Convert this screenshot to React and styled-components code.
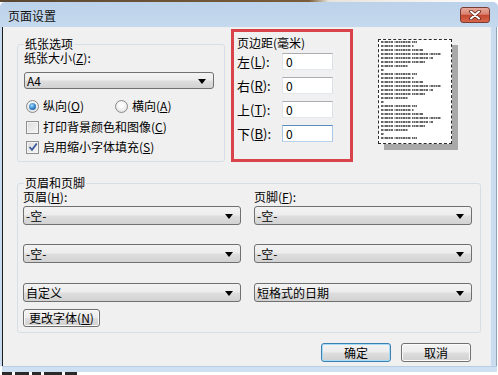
import React from 'react';
import styled, { createGlobalStyle } from 'styled-components';

const Global = createGlobalStyle`
  html, body { margin: 0; padding: 0; background: #fff; }
  body {
    font-family: "Noto Sans CJK SC", "Liberation Sans", sans-serif;
    font-size: 12px;
    color: #000;
  }
  * { box-sizing: border-box; }
`;

const Window = styled.div`
  width: 498px;
  height: 375px;
  display: flex;
  flex-direction: column;
  overflow: hidden;
  background: #fff;
`;

const Desktop = styled.div`
  height: 2px;
  background: linear-gradient(90deg, #5b4732 0%, #7a5c38 62%, #e8e2da 66%, #ffffff 100%);
`;

const TitleBar = styled.div`
  height: 25px;
  display: flex;
  align-items: flex-start;
  justify-content: space-between;
  padding: 0 8px 0 8px;
  background: linear-gradient(180deg, #bcd2ea 0%, #c5d9ee 100%);
  border-radius: 5px 5px 0 0;
`;

const Title = styled.div`
  font-size: 12px;
  line-height: 16px;
  margin-top: 6px;
  color: #111;
`;

const CloseBtn = styled.div`
  width: 30px;
  height: 16px;
  margin-top: 5px;
  border: 1px solid #7a3b32;
  border-radius: 3px;
  background: linear-gradient(180deg, #e9a99b 0%, #d9806e 45%, #c4472f 52%, #d8674c 100%);
  display: flex;
  align-items: center;
  justify-content: center;
`;

const Middle = styled.div`
  height: 339px;
  display: flex;
`;

const LeftFrame = styled.div`
  width: 3px;
  background: linear-gradient(90deg, #c8daee 0 2px, #1c1c1c 2px 3px);
`;

const RightFrame = styled.div`
  width: 8px;
  background: linear-gradient(90deg, #e6eef7 0 1px, #cbdcef 1px 6px, #8fa3b9 6px 7px, #ffffff 7px);
`;

const Client = styled.div`
  flex: 1;
  background: #f0f0f0;
  padding: 2px 9px 0 14px;
  display: flex;
  flex-direction: column;
`;

const BottomFrame = styled.div`
  height: 6px;
  margin-left: 2px;
  margin-right: 1px;
  background: linear-gradient(180deg, #b9cde3 0 1px, #cfe0f2 1px);
`;

const Strip = styled.div`
  height: 3px;
  display: flex;
  gap: 3px;
  padding-left: 2px;
  background: #fff;
`;

const StripMark = styled.span`
  width: ${p => p.$w}px;
  height: 3px;
  background: #2a2a2a;
`;

const TopRow = styled.div`
  display: flex;
  align-items: flex-start;
`;

const Group = styled.fieldset`
  margin: ${p => p.$mt}px 0 0 0;
  width: ${p => p.$w}px;
  padding: 0 ${p => p.$pr}px ${p => p.$pb}px ${p => p.$pl}px;
  border: 1px solid #d5dfe5;
  border-radius: 3px;
  min-inline-size: 0;
`;

const Legend = styled.legend`
  font-size: 12px;
  line-height: 14px;
  padding: 0 1px;
  margin-left: ${p => p.$ml || 0}px;
`;

const Label = styled.div`
  line-height: 14px;
  height: 14px;
  white-space: nowrap;
`;

const Combo = styled.div`
  width: ${p => p.$w}px;
  height: ${p => p.$h}px;
  margin-top: ${p => p.$mt || 0}px;
  border: 1px solid #707070;
  border-radius: 3px;
  background: linear-gradient(180deg, #f3f3f3 0%, #ececec 48%, #dedede 52%, #d2d2d2 100%);
  display: flex;
  align-items: center;
  justify-content: space-between;
  padding: 0 7px 0 2px;
  line-height: 14px;
  white-space: nowrap;
`;

const Arrow = styled.span`
  width: 0;
  height: 0;
  border-left: 4px solid transparent;
  border-right: 4px solid transparent;
  border-top: 5px solid #000;
  margin-top: 1px;
`;

const OptionRow = styled.div`
  display: flex;
  align-items: center;
  height: 16px;
  margin-top: ${p => p.$mt}px;
  padding-left: 2px;
`;

const Option = styled.label`
  display: flex;
  align-items: center;
  gap: 4px;
  width: ${p => (p.$w ? `${p.$w}px` : 'auto')};
  line-height: 14px;
  white-space: nowrap;
`;

const Radio = styled.span`
  width: 13px;
  height: 13px;
  border-radius: 50%;
  border: 1px solid #8a8a8a;
  background: radial-gradient(circle at 50% 40%, #ffffff 20%, #d6d6d6 100%);
  display: inline-flex;
  align-items: center;
  justify-content: center;
  flex: none;
  &::after {
    content: '';
    width: ${p => (p.$checked ? '7px' : '0')};
    height: ${p => (p.$checked ? '7px' : '0')};
    border-radius: 50%;
    background: radial-gradient(circle at 40% 35%, #9fdcff 0%, #2f7fc4 55%, #17457f 100%);
  }
`;

const Check = styled.span`
  width: 13px;
  height: 13px;
  border: 1px solid #8e8f8f;
  background: linear-gradient(135deg, #dcdcdc 0%, #f6f6f6 100%);
  box-shadow: inset 0 0 0 1px #f4f4f4;
  display: inline-flex;
  align-items: center;
  justify-content: center;
  flex: none;
`;

const MarginBox = styled.div`
  width: 122px;
  height: 133px;
  margin-left: 6px;
  border: 3px solid #d9434a;
  padding: 4px 0 0 3px;
  display: flex;
  flex-direction: column;
  gap: 7px;
`;

const MarginTitle = styled.div`
  line-height: 14px;
  margin-bottom: -4px;
`;

const MarginRow = styled.div`
  display: flex;
  align-items: center;
  height: 17px;
`;

const MarginLabel = styled.span`
  width: 45px;
  line-height: 14px;
  font-size: 13px;
  white-space: nowrap;
`;

const NumInput = styled.input`
  width: 51px;
  height: 17px;
  margin: 0;
  padding: 0 0 0 3px;
  font-family: inherit;
  font-size: 12px;
  line-height: 14px;
  color: #000;
  background: #fff;
  border: 1px solid;
  border-color: ${p => (p.$focus ? '#5a8dbf #a9c6e4 #b7d2ec #a9c6e4' : '#abadb3 #dbdfe6 #e3e9ef #e2e3ea')};
  outline: none;
`;

const Preview = styled.div`
  width: 74px;
  height: 105px;
  margin: 10px 0 0 25px;
  background: #fff;
  border: 1px dashed #2a2a2a;
  box-shadow: 6px 6px 0 #a9a9a9;
  flex: none;
`;

const Columns = styled.div`
  display: grid;
  grid-template-columns: 218px 218px;
  column-gap: 13px;
`;

const Column = styled.div`
  display: flex;
  flex-direction: column;
`;

const Button = styled.div`
  width: ${p => p.$w}px;
  height: ${p => p.$h}px;
  margin-top: ${p => p.$mt || 0}px;
  border: 1px solid ${p => (p.$default ? '#3c7fb1' : '#707070')};
  border-radius: 3px;
  background: linear-gradient(180deg, #f4f4f4 0%, #ececec 48%, #dedede 52%, #d0d0d0 100%);
  box-shadow: ${p => (p.$default ? 'inset 0 0 0 1px #a8dcf6' : 'inset 0 0 0 1px #fbfbfb')};
  display: flex;
  align-items: center;
  justify-content: center;
  line-height: 14px;
  white-space: nowrap;
`;

const ButtonRow = styled.div`
  display: flex;
  justify-content: flex-end;
  gap: 10px;
  margin-top: 10px;
  padding-right: 10px;
`;

const blockWidths = [36, 33, 42, 60, 52, 44, 27, 3];
const previewLines = [];
for (let b = 0; b < 3; b++) blockWidths.forEach(w => previewLines.push(w));
previewLines.push(36);

function PagePreview() {
  return (
    <Preview>
      <svg width="72" height="103" viewBox="0 0 72 103">
        {previewLines.map((w, i) => (
          <line
            key={i}
            x1="2"
            x2={2 + w}
            y1={2 + i * 4}
            y2={2 + i * 4}
            stroke="#333"
            strokeWidth="1.7"
            strokeDasharray="2 0.5 1 0.5 3 0.5 1.5 0.5 2.5 1.5 1 0.5 2 0.5"
          />
        ))}
      </svg>
    </Preview>
  );
}

function Key({ c }) {
  return (
    <>
      (<u>{c}</u>)
    </>
  );
}

export default function App() {
  return (
    <>
      <Global />
      <Window>
        <Desktop />
        <TitleBar>
          <Title>页面设置</Title>
          <CloseBtn>
            <svg width="14" height="10" viewBox="0 0 14 10">
              <path d="M3 1.5 L11 8.5 M11 1.5 L3 8.5" stroke="#5a1e16" strokeWidth="3.6" strokeLinecap="round" />
              <path d="M3 1.5 L11 8.5 M11 1.5 L3 8.5" stroke="#ffffff" strokeWidth="2" strokeLinecap="round" />
            </svg>
          </CloseBtn>
        </TitleBar>
        <Middle>
          <LeftFrame />
          <Client>
            <TopRow>
              <Group $mt={8} $w={208} $pl={6} $pr={6} $pb={6}>
                <Legend>纸张选项</Legend>
                <Label>纸张大小<Key c="Z" />:</Label>
                <Combo $w={190} $h={17} $mt={7}>
                  <span>A4</span>
                  <Arrow />
                </Combo>
                <OptionRow $mt={9}>
                  <Option $w={89}>
                    <Radio $checked />
                    <span>纵向<Key c="O" /></span>
                  </Option>
                  <Option>
                    <Radio />
                    <span>横向<Key c="A" /></span>
                  </Option>
                </OptionRow>
                <OptionRow $mt={5}>
                  <Option>
                    <Check />
                    <span>打印背景颜色和图像<Key c="C" /></span>
                  </Option>
                </OptionRow>
                <OptionRow $mt={4}>
                  <Option>
                    <Check>
                      <svg width="10" height="10" viewBox="0 0 10 10">
                        <path d="M1.5 5 L4 7.8 L8.8 1.5" fill="none" stroke="#3b5a9a" strokeWidth="1.8" />
                      </svg>
                    </Check>
                    <span>启用缩小字体填充<Key c="S" /></span>
                  </Option>
                </OptionRow>
              </Group>
              <MarginBox>
                <MarginTitle>页边距(毫米)</MarginTitle>
                <MarginRow>
                  <MarginLabel>左<Key c="L" />:</MarginLabel>
                  <NumInput defaultValue="0" readOnly />
                </MarginRow>
                <MarginRow>
                  <MarginLabel>右<Key c="R" />:</MarginLabel>
                  <NumInput defaultValue="0" readOnly />
                </MarginRow>
                <MarginRow>
                  <MarginLabel>上<Key c="T" />:</MarginLabel>
                  <NumInput defaultValue="0" readOnly />
                </MarginRow>
                <MarginRow>
                  <MarginLabel>下<Key c="B" />:</MarginLabel>
                  <NumInput defaultValue="0" readOnly $focus />
                </MarginRow>
              </MarginBox>
              <PagePreview />
            </TopRow>
            <Group $mt={14} $w={464} $pl={5} $pr={8} $pb={5}>
              <Legend $ml={1}>页眉和页脚</Legend>
              <Columns>
                <Column>
                  <Label>页眉<Key c="H" />:</Label>
                  <Combo $w={218} $h={19} $mt={2}><span>-空-</span><Arrow /></Combo>
                  <Combo $w={218} $h={19} $mt={19}><span>-空-</span><Arrow /></Combo>
                  <Combo $w={218} $h={19} $mt={20}><span>自定义</span><Arrow /></Combo>
                  <Button $w={77} $h={18} $mt={7}>更改字体<Key c="N" /></Button>
                </Column>
                <Column>
                  <Label>页脚<Key c="F" />:</Label>
                  <Combo $w={218} $h={19} $mt={2}><span>-空-</span><Arrow /></Combo>
                  <Combo $w={218} $h={19} $mt={19}><span>-空-</span><Arrow /></Combo>
                  <Combo $w={218} $h={19} $mt={20}><span>短格式的日期</span><Arrow /></Combo>
                </Column>
              </Columns>
            </Group>
            <ButtonRow>
              <Button $w={70} $h={19} $default>确定</Button>
              <Button $w={70} $h={19}>取消</Button>
            </ButtonRow>
          </Client>
          <RightFrame />
        </Middle>
        <BottomFrame />
        <Strip>
          <StripMark $w={10} />
          <StripMark $w={14} />
          <StripMark $w={9} />
          <StripMark $w={18} />
          <StripMark $w={12} />
        </Strip>
      </Window>
    </>
  );
}
